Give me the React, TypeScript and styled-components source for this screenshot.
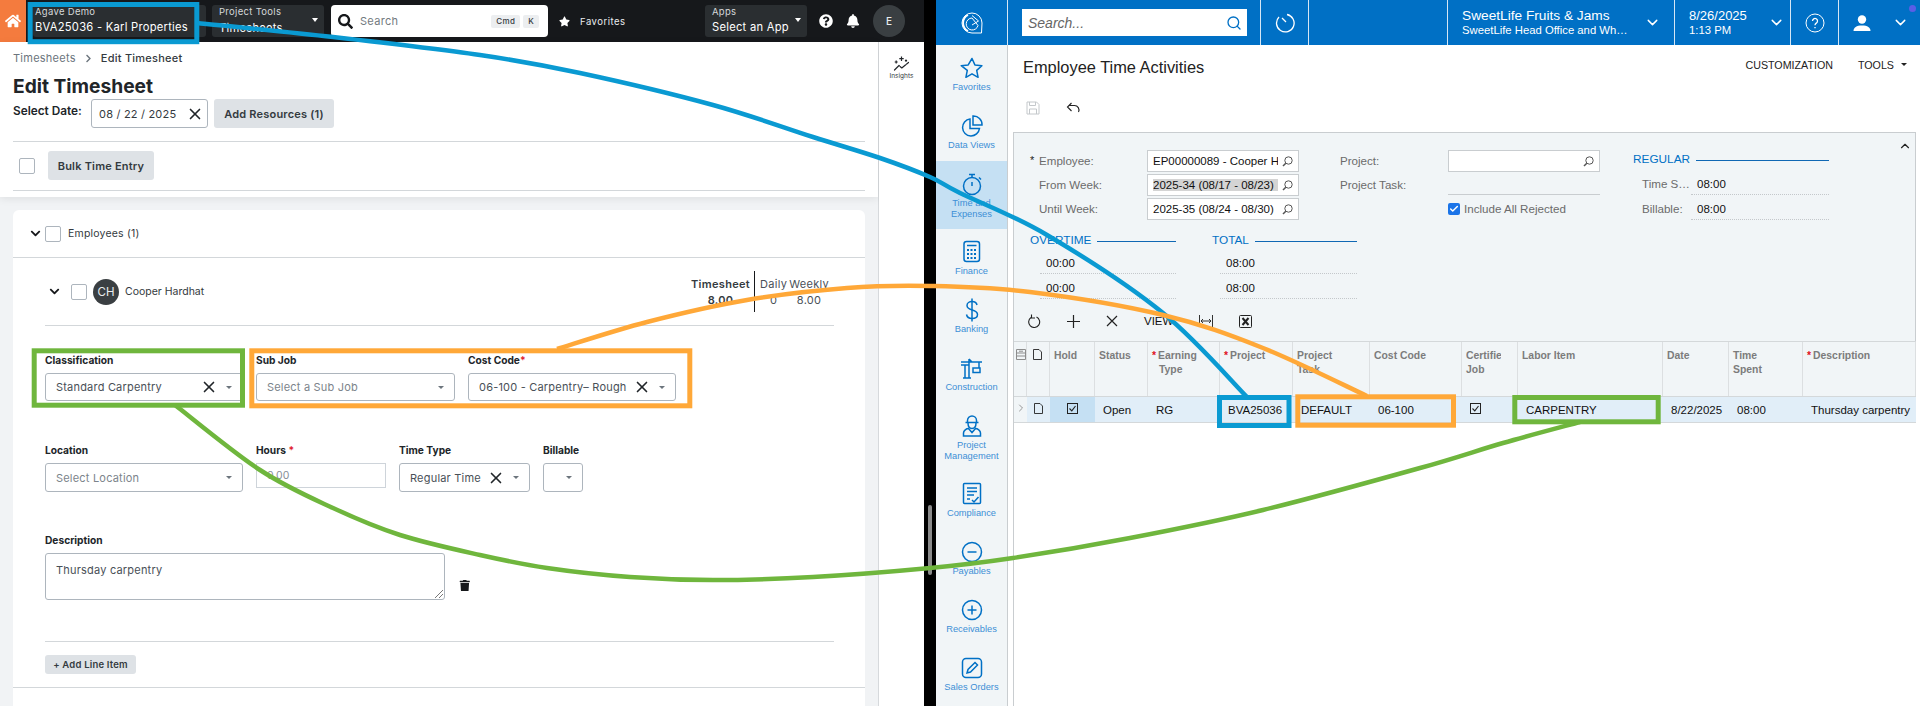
import type { ReactNode } from "react";
import styled, { createGlobalStyle } from "styled-components";
import {
  FaBell,
  FaChevronDown,
  FaChevronRight,
  FaHome,
  FaQuestionCircle,
  FaSearch,
  FaStar,
  FaTrash,
} from "react-icons/fa";
import { Check, ChevronDown, ChevronRight, ChevronUp, Search, X } from "lucide-react";

const INTER = `Inter, "Liberation Sans", sans-serif`;
const ARIAL = `"Liberation Sans", Arial, sans-serif`;
const ACU_BLUE = "#0070c5";

const GlobalStyle = createGlobalStyle`
  html, body { margin: 0; padding: 0; background: #000; }
  * { box-sizing: border-box; }
  #root { width: 1920px; height: 706px; overflow: hidden; }
`;

const Page = styled.div`
  position: relative;
  display: flex;
  width: 1920px;
  height: 706px;
  overflow: hidden;
`;

/* ---------- left app ---------- */

const LeftPane = styled.div`
  width: 924px;
  display: flex;
  flex-direction: column;
  font-family: ${INTER};
  color: #212529;
`;

const TopBar = styled.header`
  height: 42px;
  flex: none;
  display: flex;
  align-items: center;
  background: #16181b;
  padding-right: 19px;
`;

const HomeButton = styled.div`
  width: 26px;
  height: 42px;
  background: #f47b3e;
  color: #fff;
  display: flex;
  align-items: center;
  justify-content: center;
  font-size: 16px;
  margin-right: 7px;
`;

const ContextBox = styled.div<{ $w: number; $ml?: number; $pl?: number }>`
  position: relative;
  width: ${(p) => p.$w}px;
  height: 32px;
  margin-left: ${(p) => p.$ml ?? 0}px;
  padding: 0 7px 0 ${(p) => p.$pl ?? 7}px;
  background: #2a2e31;
  border-radius: 3px;
  overflow: hidden;
  color: #fff;
  flex: none;
`;

const ContextLabel = styled.div`
  font-size: 9.5px;
  line-height: 11px;
  padding-top: 1px;
  letter-spacing: 0.3px;
  color: #d5d8da;
`;

const ContextValue = styled.div<{ $low?: boolean }>`
  font-size: 11.2px;
  line-height: 14px;
  margin-top: ${(p) => (p.$low ? 4 : 3)}px;
  letter-spacing: 0.25px;
  white-space: nowrap;
`;

const WhiteCaret = styled.span`
  position: absolute;
  right: 6px;
  top: 13px;
  border: 3.5px solid transparent;
  border-top: 4px solid #fff;
  border-bottom: 0;
`;

const SearchBox = styled.div`
  width: 217px;
  height: 32px;
  margin-left: 7px;
  padding: 0 9px 0 7px;
  background: #fff;
  border-radius: 4px;
  display: flex;
  align-items: center;
  font-size: 11px;
  letter-spacing: 0.3px;
  color: #737a80;
  flex: none;

  svg {
    color: #16181b;
    font-size: 15px;
    margin-right: 7px;
  }
`;

const KbdGroup = styled.span`
  margin-left: auto;
  display: flex;
  gap: 3px;
`;

const Kbd = styled.span`
  height: 13px;
  padding: 0 5px;
  background: #eceef0;
  border-radius: 2px;
  font-size: 8px;
  font-weight: 500;
  line-height: 13px;
  color: #343a40;
`;

const FavoriteLink = styled.div`
  display: flex;
  align-items: center;
  gap: 10px;
  margin-left: 11px;
  font-size: 9.5px;
  letter-spacing: 0.5px;
  color: #e9ecef;
  flex: 1;

  svg {
    font-size: 11px;
    color: #fff;
  }
`;

const BarIcon = styled.span<{ $ml: number }>`
  display: flex;
  margin-left: ${(p) => p.$ml}px;
  color: #fff;
  font-size: 14px;
`;

const UserBadge = styled.div`
  width: 32px;
  height: 32px;
  margin-left: 13px;
  border-radius: 50%;
  background: #3a3f42;
  color: #e9ecef;
  font-size: 10px;
  font-weight: 500;
  display: flex;
  align-items: center;
  justify-content: center;
`;

const LeftBody = styled.div`
  flex: 1;
  display: flex;
  min-height: 0;
`;

const Main = styled.main`
  width: 879px;
  background: #f1f3f5;
  border-right: 1px solid #d6d9dc;
`;

const InsightsRail = styled.aside`
  flex: 1;
  background: #fff;
  padding-top: 13px;
  display: flex;
  flex-direction: column;
  align-items: center;
  font-size: 6.5px;
  color: #343a40;
`;

const PageHead = styled.div`
  height: 155px;
  padding: 0 13px;
  background: #fff;
  box-shadow: 0 2px 8px rgba(0, 0, 0, 0.08);
`;

const Crumbs = styled.nav`
  display: flex;
  align-items: center;
  height: 16px;
  padding-top: 8px;
  box-sizing: content-box;
  font-size: 11px;
  letter-spacing: 0.25px;
  color: #6c757d;

  svg {
    margin: 0 8px 0 8px;
    font-size: 9px;
  }

  b {
    font-weight: 500;
    color: #343a40;
  }
`;

const PageTitle = styled.h1`
  margin: 8px 0 0;
  font-size: 19.2px;
  line-height: 24px;
  font-weight: 700;
  color: #212529;
`;

const DateRow = styled.div`
  display: flex;
  margin-top: 1px;
`;

const DateLabel = styled.label`
  width: 78px;
  font-size: 11.8px;
  font-weight: 600;
  line-height: 24px;
`;

const DateInput = styled.div`
  width: 117px;
  height: 29px;
  border: 1px solid #adb5bd;
  border-radius: 3px;
  padding: 0 7px;
  display: flex;
  align-items: center;
  justify-content: space-between;
  font-size: 11px;
  letter-spacing: 0.2px;
  color: #343a40;
`;

const GreyButton = styled.button<{ $w: number; $ml?: number }>`
  width: ${(p) => p.$w}px;
  height: 29px;
  margin-left: ${(p) => p.$ml ?? 0}px;
  padding: 0;
  border: 0;
  border-radius: 3px;
  background: #dee2e6;
  font-family: ${INTER};
  font-size: 11px;
  font-weight: 600;
  letter-spacing: 0.2px;
  color: #343a40;
`;

const Rule = styled.hr<{ $mt?: number }>`
  height: 1px;
  border: 0;
  margin: ${(p) => p.$mt ?? 0}px 0 0;
  background: #d3d7da;
`;

const BulkRow = styled.div`
  display: flex;
  align-items: center;
  margin-top: 9px;
  padding-left: 6px;
`;

const Box = styled.span<{ $mr?: number; $ml?: number }>`
  display: block;
  width: 16px;
  height: 16px;
  margin-right: ${(p) => p.$mr ?? 0}px;
  margin-left: ${(p) => p.$ml ?? 0}px;
  border: 1px solid #adb5bd;
  border-radius: 2px;
  background: #fff;
  flex: none;
`;

const Card = styled.section`
  width: 852px;
  height: 500px;
  margin: 13px 0 0 13px;
  background: #fff;
  border-radius: 6px 6px 0 0;
`;

const CardHeader = styled.div`
  height: 48px;
  padding-left: 17px;
  display: flex;
  align-items: center;
  border-bottom: 1px solid #d3d7da;
  font-size: 10.5px;
  letter-spacing: 0.2px;
  color: #343a40;

  svg {
    font-size: 11px;
    color: #16181b;
    margin-right: 4px;
  }
`;

const CardBody = styled.div`
  padding: 0 31px 0 32px;
`;

const EmployeeRow = styled.div`
  height: 68px;
  padding: 0 5px 0 4px;
  display: flex;
  align-items: center;
  border-bottom: 1px solid #d3d7da;
  font-size: 10.5px;
  color: #343a40;

  svg {
    font-size: 11px;
    color: #16181b;
    margin-right: 11px;
  }
`;

const Initials = styled.span`
  width: 26px;
  height: 26px;
  margin: 0 6px;
  border-radius: 50%;
  background: #3a3f42;
  color: #e9ecef;
  font-size: 11.5px;
  display: flex;
  align-items: center;
  justify-content: center;
`;

const Stats = styled.div`
  margin-left: auto;
  display: flex;
  align-items: center;
  font-size: 11px;
  line-height: 16px;
  letter-spacing: 0.3px;
  text-align: center;
`;

const StatTotal = styled.div`
  font-weight: 600;
`;

const StatSplit = styled.span`
  width: 1px;
  height: 41px;
  margin: 0 5px 0 4px;
  background: #16181b;
`;

const StatGrid = styled.div`
  display: grid;
  grid-template-columns: auto auto;
  column-gap: 2px;
  color: #495057;
`;

const FieldRow = styled.div<{ $mt: number }>`
  display: flex;
  gap: 13px;
  margin-top: ${(p) => p.$mt}px;
`;

const FieldWrap = styled.div<{ $w: number }>`
  width: ${(p) => p.$w}px;
  flex: none;
`;

const FieldLabel = styled.label`
  display: block;
  height: 14px;
  margin-bottom: 6px;
  font-size: 10.2px;
  font-weight: 700;
  line-height: 14px;
  color: #212529;

  em {
    font-style: normal;
    color: #e0202c;
  }
`;

const SelectBox = styled.div<{ $h?: number }>`
  height: ${(p) => p.$h ?? 28}px;
  padding: 0 10px;
  display: flex;
  align-items: center;
  border: 1px solid #adb5bd;
  border-radius: 3px;
  font-size: 11px;
  letter-spacing: 0.2px;
  white-space: nowrap;
  color: #495057;
`;

const Placeholder = styled.span`
  color: #7c848b;
`;

const ClearIcon = styled.span`
  display: flex;
  margin-left: auto;
  color: #212529;

  svg {
    margin: -4px;
  }
`;

const DateClear = styled(ClearIcon)`
  margin-left: 0;
`;

const Caret = styled.span<{ $solo?: boolean }>`
  margin-left: ${(p) => (p.$solo ? "auto" : "12px")};
  border: 3px solid transparent;
  border-top: 3.5px solid #6c757d;
  border-bottom: 0;
`;

const HoursInput = styled.div`
  height: 25px;
  margin-top: 1px;
  padding-left: 10px;
  border: 1px solid #ced4da;
  font-size: 10.5px;
  line-height: 23px;
  color: #868e96;
`;

const DescriptionRow = styled.div`
  display: flex;
  align-items: flex-end;
  margin-top: 41px;
`;

const TextBox = styled.div`
  width: 400px;
  height: 47px;
  padding: 9px 10px;
  position: relative;
  border: 1px solid #adb5bd;
  border-radius: 3px;
  font-size: 11px;
  letter-spacing: 0.2px;
  line-height: 14px;
  color: #495057;
`;

const ResizeGrip = styled.svg`
  position: absolute;
  right: 1px;
  bottom: 1px;
`;

const TrashButton = styled.span`
  display: flex;
  margin: 0 0 9px 14px;
  font-size: 11.5px;
  color: #16181b;
`;

const AddLineButton = styled(GreyButton)`
  display: block;
  height: 19px;
  margin-top: 13px;
  font-size: 9.5px;
`;

const CardFoot = styled.div`
  margin-top: 13px;
  border-top: 1px solid #d3d7da;
`;

/* ---------- black gutter ---------- */

const Gutter = styled.div`
  position: relative;
  width: 12px;
  background: #000;
`;

const ScrollThumb = styled.div`
  position: absolute;
  left: 4px;
  top: 505px;
  width: 4px;
  height: 70px;
  border-radius: 2px;
  background: #8a8a8a;
`;

/* ---------- right app ---------- */

const RightPane = styled.div`
  width: 984px;
  display: flex;
  flex-direction: column;
  font-family: ${ARIAL};
  background: #fff;
`;

const AcuBar = styled.header`
  height: 45px;
  flex: none;
  display: flex;
  background: ${ACU_BLUE};
  color: #fff;
`;

const BarCell = styled.div<{ $w?: number; $center?: boolean; $last?: boolean }>`
  position: relative;
  width: ${(p) => (p.$w ? `${p.$w}px` : "auto")};
  flex: ${(p) => (p.$w ? "none" : 1)};
  display: flex;
  align-items: center;
  justify-content: ${(p) => (p.$center ? "center" : "flex-start")};
  border-right: ${(p) => (p.$last ? 0 : "1px solid #d5e6f5")};
`;

const AcuSearch = styled.div`
  width: 225px;
  height: 27px;
  margin-left: 14px;
  padding: 0 5px 0 6px;
  display: flex;
  align-items: center;
  justify-content: space-between;
  background: #fff;
  color: #666;
  font-size: 14px;
  font-style: italic;

  svg {
    color: ${ACU_BLUE};
  }
`;

const CellText = styled.div<{ $w: number }>`
  width: ${(p) => p.$w}px;
  margin-left: 14px;
  white-space: nowrap;
`;

const CellTop = styled.div<{ $big?: boolean }>`
  font-size: ${(p) => (p.$big ? 13.7 : 13)}px;
  line-height: 15px;
`;

const CellBottom = styled.div`
  font-size: 11.3px;
  line-height: 14px;
`;

const UserGlyph = styled.span`
  display: flex;
  margin: 0 21px 0 14px;
`;

const StatusDot = styled.span`
  position: absolute;
  right: 4px;
  top: 5px;
  width: 7px;
  height: 7px;
  border-radius: 50%;
  background: #5a5ee6;
`;

const AcuBody = styled.div`
  flex: 1;
  display: flex;
  min-height: 0;
`;

const Sidebar = styled.nav`
  width: 72px;
  flex: none;
  background: #f1f5f7;
  border-right: 1px solid #c9cdd0;
`;

const NavItem = styled.div<{ $tall?: boolean; $active?: boolean }>`
  height: ${(p) => (p.$tall ? 68 : 58)}px;
  padding-top: 11px;
  display: flex;
  flex-direction: column;
  align-items: center;
  background: ${(p) => (p.$active ? "#c5e0f3" : "transparent")};
  color: ${ACU_BLUE};
`;

const NavLabel = styled.div`
  margin-top: 2px;
  font-size: 9.3px;
  line-height: 10.5px;
  text-align: center;
  white-space: pre-line;
  color: #3d8fd6;
`;

const Content = styled.div`
  flex: 1;
  min-width: 0;
`;

const TitleRow = styled.div`
  height: 45px;
  padding: 0 13px 0 15px;
  display: flex;
  align-items: center;
`;

const ScreenTitle = styled.h2`
  margin: 0;
  font-size: 16.4px;
  font-weight: 400;
  color: #222;
`;

const TitleLinks = styled.div`
  margin-left: auto;
  margin-top: -6px;
  display: flex;
  align-items: center;
  gap: 25px;
  font-size: 10.7px;
  color: #222;
`;

const TinyCaret = styled.span`
  margin-left: -18px;
  border: 3px solid transparent;
  border-top: 3.5px solid #222;
  border-bottom: 0;
`;

const ScreenTools = styled.div`
  height: 42px;
  padding: 0 0 6px 18px;
  display: flex;
  align-items: center;
  gap: 26px;
`;

const Sheet = styled.div`
  height: 574px;
  margin: 0 4px 0 5px;
  border-left: 1px solid #c9cdd0;
`;

const FormPanel = styled.div`
  position: relative;
  height: 209px;
  background: #f1f5f7;
  border-top: 1px solid #c9cdd0;
  border-right: 1px solid #c9cdd0;
`;

const FormBody = styled.div`
  height: 166px;
  padding: 17px 0 0 16px;
`;

const CollapseIcon = styled.span`
  position: absolute;
  right: 3px;
  top: 6px;
  display: flex;
  color: #222;
`;

const FormTop = styled.div`
  display: flex;
  height: 72px;
`;

const FormCol = styled.div<{ $w: number; $ml?: number }>`
  width: ${(p) => p.$w}px;
  margin-left: ${(p) => p.$ml ?? 0}px;
  flex: none;
`;

const FormLine = styled.div`
  position: relative;
  height: 24px;
  display: flex;
  align-items: flex-start;
`;

const FormLabel = styled.span<{ $w: number; $pl?: number }>`
  width: ${(p) => p.$w}px;
  padding-left: ${(p) => p.$pl ?? 9}px;
  font-size: 11.6px;
  line-height: 21px;
  color: #6b6b6b;
  white-space: nowrap;
  flex: none;
`;

const RequiredMark = styled.span`
  position: absolute;
  left: 0;
  top: 0;
  font-size: 11px;
  line-height: 21px;
  color: #222;
`;

const LookupInput = styled.div`
  width: 152px;
  height: 22px;
  padding: 0 5px;
  display: flex;
  align-items: center;
  border: 1px solid #c9cdd0;
  background: #fff;
  font-size: 11.5px;
  color: #111;
  overflow: hidden;
`;

const LookupText = styled.span<{ $selected?: boolean }>`
  width: 125px;
  overflow: hidden;
  white-space: nowrap;
  background: ${(p) => (p.$selected ? "#d4d4d4" : "transparent")};
`;

const LookupIcon = styled.span`
  display: flex;
  margin-left: auto;
  color: #555;
`;

const Underlined = styled.div`
  flex: 1;
  height: 21px;
  border-bottom: 1px solid #c9cdd0;
`;

const CheckField = styled.div`
  display: flex;
  align-items: center;
  gap: 4px;
  height: 21px;
  font-size: 11.6px;
  color: #6b6b6b;
`;

const BlueCheck = styled.span`
  width: 12px;
  height: 12px;
  border-radius: 2px;
  background: #1b74e8;
  color: #fff;
  display: flex;
  align-items: center;
  justify-content: center;
`;

const SectionHead = styled.div`
  display: flex;
  align-items: center;
  gap: 6px;
  height: 17px;
  margin-bottom: 1px;
  font-size: 11.8px;
  color: ${ACU_BLUE};
`;

const RegularHead = styled(SectionHead)`
  padding-top: 1px;
  margin-bottom: 3px;
`;

const SectionLine = styled.span`
  flex: 1;
  height: 1px;
  margin-top: 3px;
  background: #1068b4;
`;

const ReadoutLine = styled.div`
  display: flex;
  height: 25px;
`;

const ReadoutLabel = styled(FormLabel)`
  line-height: 27px;
`;

const ValueLine = styled.div<{ $pl: number }>`
  display: flex;
  height: 25px;
  padding-left: ${(p) => p.$pl}px;
`;

const ValueCell = styled.div`
  flex: 1;
  display: flex;
  align-items: flex-end;
  padding: 0 0 2px 6px;
  border-bottom: 1px dotted #c4c8cb;
  font-size: 11.5px;
  line-height: 16px;
  color: #111;
`;

const Totals = styled.div`
  display: flex;
  margin-top: 9px;
`;

const GridTools = styled.div`
  height: 42px;
  padding: 2px 0 0 14px;
  display: flex;
  align-items: center;
  gap: 26px;
  font-size: 11.5px;
  color: #111;
`;

const GRID_COLUMNS = "13px 23px 45px 53px 72px 73px 77px 92px 56px 145px 66px 74px 113px";

const GridHead = styled.div`
  display: grid;
  grid-template-columns: ${GRID_COLUMNS};
  height: 56px;
  background: #f1f5f7;
  border-top: 1px solid #d4d8da;
  border-bottom: 1px solid #d4d8da;
`;

const HeadCell = styled.div<{ $pl?: number }>`
  padding: 7px 0 0 ${(p) => p.$pl ?? 4}px;
  border-right: 1px solid #dcdfe1;
  font-size: 10.4px;
  font-weight: 700;
  line-height: 14px;
  color: #7c7c7c;
  white-space: pre-line;

  i {
    font-style: normal;
    color: #e0101c;
    margin-right: 2px;
  }
`;

const HangingLine = styled.span`
  padding-left: 7px;
`;

const ClippedHead = styled.span`
  display: block;
  width: 35px;
  overflow: hidden;
  white-space: nowrap;
`;

const GridRow = styled.div`
  display: grid;
  grid-template-columns: ${GRID_COLUMNS};
  height: 26px;
  background: #e1eef8;
  border-bottom: 1px solid #d4d8da;
`;

const RowCell = styled.div<{ $active?: boolean; $center?: boolean }>`
  display: flex;
  align-items: center;
  justify-content: ${(p) => (p.$center ? "center" : "flex-start")};
  padding-left: ${(p) => (p.$center ? 0 : 8)}px;
  background: ${(p) => (p.$active ? "#c5e0f3" : "transparent")};
  font-size: 11.5px;
  white-space: nowrap;
  color: #111;

  svg {
    margin-bottom: 3px;
  }
`;

const RowHandle = styled(RowCell)`
  background: #f1f5f7;
  color: #777;
  padding-left: 0;
`;

const Annotations = styled.svg`
  position: absolute;
  inset: 0;
  pointer-events: none;
`;

/* ---------- drawings ---------- */

function InsightsIcon() {
  return (
    <svg width="17" height="17" viewBox="0 0 17 17" fill="none" stroke="#212529" strokeWidth="1.2">
      <path d="M1.5 15 6 10.5l2.8 2.5L15.5 7.5" strokeLinecap="round" strokeLinejoin="round" strokeDasharray="7 1.2" />
      <path d="M8.5 1.5v4.5M6.3 3.7h4.4M3.2 5.5v3M1.7 7h3M13 4.5v2.2M11.9 5.6h2.2" />
    </svg>
  );
}

const stroke = { fill: "none", stroke: "currentColor", strokeWidth: 1.5 };

const navIcons: Record<string, ReactNode> = {
  star: <path {...stroke} strokeLinejoin="round" d="M12 2.5l2.9 6.4 7 .8-5.2 4.7 1.4 6.9-6.1-3.5-6.1 3.5 1.4-6.9L1.2 9.700l7-.8z" />,
  pie: (
    <g {...stroke}>
      <path d="M10 5a8.500 8.500 0 1 0 9.500 9.500H10z" />
      <path d="M13 2a8.500 8.500 0 0 1 9 9h-9z" />
    </g>
  ),
  timer: (
    <g {...stroke}>
      <circle cx="12" cy="14" r="8.500" />
      <path d="M9 2.500h6M12 2.500v3M19 5.500l2 2M12 10v4" />
    </g>
  ),
  calc: (
    <g {...stroke}>
      <rect x="4" y="1.500" width="15.500" height="20" rx="2.500" />
      <path d="M7 5.500h9.500" />
      <path strokeDasharray="2 1.500" strokeWidth="2" d="M7 10h10M7 14h10M7 18h10" />
    </g>
  ),
  dollar: (
    <g {...stroke}>
      <path d="M17 7c-.5-2.500-2.500-3.500-5-3.500S7 5 7 7.500c0 6 10.500 3 10.500 9 0 2.500-2.500 4-5.500 4s-5-1.500-5.500-4" />
      <path d="M12 .5v23" />
    </g>
  ),
  crane: (
    <g {...stroke}>
      <path d="M1 6h21M1 9h8M5 9v13M9 3v19M3 22h8M12 6l-3-3M19 6v6" />
      <rect x="13" y="12" width="7" height="4.500" />
    </g>
  ),
  worker: (
    <g {...stroke}>
      <path d="M7.500 8V6.500a4.500 4.500 0 0 1 9 0V8M5.500 8.500h13" />
      <path d="M8 9c0 3 1.500 5.500 4 5.500S16 12 16 9" />
      <path d="M3.500 22v-3c0-2.500 3-4.500 5-4.500l3.500 4 3.500-4c2 0 5 2 5 4.500v3z" />
    </g>
  ),
  checklist: (
    <g {...stroke}>
      <rect x="3.500" y="1.500" width="17" height="20" rx="1" />
      <path d="M7 6h10M7 9.500h10M7 13h7M7 17h3" />
      <path d="M12 18l2 2 4.500-5" />
    </g>
  ),
  minus: (
    <g {...stroke}>
      <circle cx="12" cy="12" r="9.500" />
      <path d="M7.500 12h9" />
    </g>
  ),
  plus: (
    <g {...stroke}>
      <circle cx="12" cy="12" r="9.500" />
      <path d="M7.500 12h9M12 7.500v9" />
    </g>
  ),
  pencil: (
    <g {...stroke}>
      <rect x="2.500" y="2.500" width="19" height="19" rx="3.500" />
      <path d="M7 17l1-3.500 7-7 2.500 2.500-7 7z" />
    </g>
  ),
};

const navItems = [
  { icon: "star", label: "Favorites" },
  { icon: "pie", label: "Data Views" },
  { icon: "timer", label: "Time and\nExpenses", tall: true, active: true },
  { icon: "calc", label: "Finance" },
  { icon: "dollar", label: "Banking" },
  { icon: "crane", label: "Construction" },
  { icon: "worker", label: "Project\nManagement", tall: true },
  { icon: "checklist", label: "Compliance" },
  { icon: "minus", label: "Payables" },
  { icon: "plus", label: "Receivables" },
  { icon: "pencil", label: "Sales Orders" },
];

function AcuLogo() {
  return (
    <svg width="24" height="24" viewBox="0 0 24 24" fill="none" stroke="#fff" strokeWidth="1">
      <path d="M21.500 22H12A10 10 0 1 1 22 12z" />
      <path d="M8 4A9 9 0 0 0 8 20" strokeWidth="1.800" />
      <path d="M12 7a6 6 0 1 0 6 7.500z" />
      <path d="M12 4.500 18.500 10 12 14" />
    </svg>
  );
}

function RecentIcon() {
  return (
    <svg width="20" height="20" viewBox="0 0 20 20" fill="none" stroke="#fff" strokeWidth="1.300">
      <path d="M12 1.500A8.800 8.800 0 1 1 4 4" />
      <path d="M7 5l4 4" />
    </svg>
  );
}

function HelpCircle() {
  return (
    <svg width="20" height="20" viewBox="0 0 20 20" fill="none" stroke="#fff" strokeWidth="1">
      <circle cx="10" cy="10" r="9" />
      <path d="M7.500 8a2.500 2.500 0 1 1 3.800 2.100c-.9.600-1.300 1-1.300 2.100M10 14v1.200" strokeWidth="1.300" />
    </svg>
  );
}

function UserIcon() {
  return (
    <svg width="18" height="16" viewBox="0 0 18 16" fill="#fff">
      <circle cx="9" cy="4.500" r="4.200" />
      <path d="M0.500 16c0-3.500 3-5.500 8.500-5.500s8.500 2 8.500 5.500z" />
    </svg>
  );
}

function LookupGlass() {
  return (
    <svg width="11" height="11" viewBox="0 0 11 11" fill="none" stroke="currentColor" strokeWidth="1">
      <circle cx="6.500" cy="4.500" r="3.700" />
      <path d="M3.800 7.200 1 10" strokeWidth="1.500" />
    </svg>
  );
}

function SaveIcon() {
  return (
    <svg width="14" height="14" viewBox="0 0 14 14" fill="none" stroke="#c4c8cb" strokeWidth="1">
      <path d="M1 1h9.500L13 3.500V13H1z" />
      <path d="M3.500 1v3.500h6V1M3.500 13V8h7v5" />
    </svg>
  );
}

function UndoIcon() {
  return (
    <svg width="15" height="13" viewBox="0 0 15 13" fill="none" stroke="#222" strokeWidth="1.100">
      <path d="M3 3.500h5.500a4.500 4.500 0 0 1 4 6.500" />
      <path d="M5.500 1 1.500 5l4 4" />
    </svg>
  );
}

function RefreshIcon() {
  return (
    <svg width="13" height="14" viewBox="0 0 13 14" fill="none" stroke="#222" strokeWidth="1.100">
      <path d="M8.500 3A5.500 5.500 0 1 1 3 3.500" />
      <path d="M3.500 .5V4H7" />
    </svg>
  );
}

function PlusIcon() {
  return (
    <svg width="13" height="13" viewBox="0 0 13 13" stroke="#222" strokeWidth="1.200">
      <path d="M6.500 0v13M0 6.500h13" />
    </svg>
  );
}

function CrossIcon() {
  return (
    <svg width="12" height="12" viewBox="0 0 12 12" stroke="#222" strokeWidth="1.200">
      <path d="M1 1l10 10M11 1 1 11" />
    </svg>
  );
}

function FitIcon() {
  return (
    <svg width="14" height="12" viewBox="0 0 14 12" stroke="#333" strokeWidth="1" fill="none">
      <path d="M.5 0v12M13.500 0v12M2 6h10M4 4 2 6l2 2M10 4l2 2-2 2" />
    </svg>
  );
}

function ExcelIcon() {
  return (
    <svg width="13" height="13" viewBox="0 0 13 13" fill="none" stroke="#222">
      <rect x=".5" y=".5" width="12" height="12" rx="1" />
      <path d="M3.500 3 9.500 10M9.500 3 3.500 10" strokeWidth="2" />
    </svg>
  );
}

function ColumnsIcon() {
  return (
    <svg width="10" height="11" viewBox="0 0 10 11" fill="none" stroke="#8d8d8d">
      <path d="M.5.500h9v10h-9zM.5 4h9M.5 7h9M3 2.200h4" />
    </svg>
  );
}

function PageIcon({ color = "#222" }: { color?: string }) {
  return (
    <svg width="9" height="11" viewBox="0 0 9 11" fill="none" stroke={color} strokeWidth=".9">
      <path d="M.5.500h5.500L8.500 3v7.500h-8z" />
    </svg>
  );
}

function GridCheck() {
  return (
    <svg width="11" height="11" viewBox="0 0 11 11" fill="none" stroke="#222">
      <rect x=".5" y=".5" width="10" height="10" />
      <path d="M2.500 5.500 4.800 7.800 8.500 3" strokeWidth="1.100" />
    </svg>
  );
}

// curve through the measured points of each annotation line
function smoothPath(pts: [number, number][]) {
  let d = `M${pts[0][0]},${pts[0][1]}`;
  for (let i = 0; i < pts.length - 1; i++) {
    const p0 = pts[i - 1] ?? pts[i];
    const p1 = pts[i];
    const p2 = pts[i + 1];
    const p3 = pts[i + 2] ?? p2;
    const c1x = p1[0] + (p2[0] - p0[0]) / 6;
    const c1y = p1[1] + (p2[1] - p0[1]) / 6;
    const c2x = p2[0] - (p3[0] - p1[0]) / 6;
    const c2y = p2[1] - (p3[1] - p1[1]) / 6;
    d += ` C${c1x},${c1y} ${c2x},${c2y} ${p2[0]},${p2[1]}`;
  }
  return d;
}

const BLUE = "#0a9ad2";
const ORANGE = "#ffa838";
const GREEN = "#6fb63d";

const bluePts: [number, number][] = [
  [197, 23], [333, 37], [480, 55], [580, 73], [713, 105], [813, 137], [880, 158], [930, 177],
  [960, 193], [1047, 235], [1163, 313], [1247, 397],
];
const orangePts: [number, number][] = [
  [557, 349], [647, 322], [747, 300], [847, 288], [930, 286], [1030, 292], [1163, 315], [1263, 348], [1367, 396],
];
const greenPts: [number, number][] = [
  [175, 405], [260, 470], [333, 508], [400, 535], [480, 555], [547, 568], [630, 577], [713, 580],
  [813, 577], [930, 568], [1013, 558], [1130, 538], [1263, 510], [1420, 468], [1503, 443], [1580, 422],
];

function Caller({ rects, pts, color }: { rects: number[][]; pts: [number, number][]; color: string }) {
  return (
    <g fill="none" stroke={color}>
      {rects.map(([x, y, r, b]) => (
        <rect key={x} x={x} y={y} width={r - x} height={b - y} strokeWidth="5" />
      ))}
      <path d={smoothPath(pts)} strokeWidth="4.500" />
    </g>
  );
}

function BigX() {
  return <X size={18} strokeWidth={2.2} />;
}

function ClearableSelect({ children }: { children: ReactNode }) {
  return (
    <SelectBox>
      {children}
      <ClearIcon>
        <BigX />
      </ClearIcon>
      <Caret />
    </SelectBox>
  );
}

export default function App() {
  return (
    <Page>
      <GlobalStyle />

      <LeftPane>
        <TopBar>
          <HomeButton>
            <FaHome />
          </HomeButton>
          <ContextBox $w={173} $pl={2}>
            <ContextLabel>Agave Demo</ContextLabel>
            <ContextValue>BVA25036 - Karl Properties</ContextValue>
          </ContextBox>
          <ContextBox $w={112} $ml={6}>
            <ContextLabel>Project Tools</ContextLabel>
            <ContextValue $low>Timesheets</ContextValue>
            <WhiteCaret />
          </ContextBox>
          <SearchBox>
            <FaSearch />
            Search
            <KbdGroup>
              <Kbd>Cmd</Kbd>
              <Kbd>K</Kbd>
            </KbdGroup>
          </SearchBox>
          <FavoriteLink>
            <FaStar />
            Favorites
          </FavoriteLink>
          <ContextBox $w={102}>
            <ContextLabel>Apps</ContextLabel>
            <ContextValue>Select an App</ContextValue>
            <WhiteCaret />
          </ContextBox>
          <BarIcon $ml={12}>
            <FaQuestionCircle />
          </BarIcon>
          <BarIcon $ml={13}>
            <FaBell />
          </BarIcon>
          <UserBadge>E</UserBadge>
        </TopBar>

        <LeftBody>
          <Main>
            <PageHead>
              <Crumbs>
                Timesheets
                <FaChevronRight />
                <b>Edit Timesheet</b>
              </Crumbs>
              <PageTitle>Edit Timesheet</PageTitle>
              <DateRow>
                <DateLabel>Select Date:</DateLabel>
                <DateInput>
                  08 / 22 / 2025
                  <DateClear>
                    <BigX />
                  </DateClear>
                </DateInput>
                <GreyButton $w={120} $ml={6}>
                  Add Resources (1)
                </GreyButton>
              </DateRow>
              <Rule $mt={13} />
              <BulkRow>
                <Box $mr={13} />
                <GreyButton $w={106}>Bulk Time Entry</GreyButton>
              </BulkRow>
              <Rule $mt={10} />
            </PageHead>

            <Card>
              <CardHeader>
                <FaChevronDown />
                <Box $mr={7} />
                Employees (1)
              </CardHeader>
              <CardBody>
                <EmployeeRow>
                  <FaChevronDown />
                  <Box />
                  <Initials>CH</Initials>
                  Cooper Hardhat
                  <Stats>
                    <StatTotal>
                      Timesheet
                      <br />
                      8.00
                    </StatTotal>
                    <StatSplit />
                    <StatGrid>
                      <span>Daily</span>
                      <span>Weekly</span>
                      <span>0</span>
                      <span>8.00</span>
                    </StatGrid>
                  </Stats>
                </EmployeeRow>

                <FieldRow $mt={27}>
                  <FieldWrap $w={198}>
                    <FieldLabel>Classification</FieldLabel>
                    <ClearableSelect>Standard Carpentry</ClearableSelect>
                  </FieldWrap>
                  <FieldWrap $w={199}>
                    <FieldLabel>Sub Job</FieldLabel>
                    <SelectBox>
                      <Placeholder>Select a Sub Job</Placeholder>
                      <Caret $solo />
                    </SelectBox>
                  </FieldWrap>
                  <FieldWrap $w={208}>
                    <FieldLabel>
                      Cost Code<em>*</em>
                    </FieldLabel>
                    <ClearableSelect>06-100 - Carpentry– Rough</ClearableSelect>
                  </FieldWrap>
                </FieldRow>

                <FieldRow $mt={42}>
                  <FieldWrap $w={198}>
                    <FieldLabel>Location</FieldLabel>
                    <SelectBox $h={29}>
                      <Placeholder>Select Location</Placeholder>
                      <Caret $solo />
                    </SelectBox>
                  </FieldWrap>
                  <FieldWrap $w={130}>
                    <FieldLabel>
                      Hours <em>*</em>
                    </FieldLabel>
                    <HoursInput>0.00</HoursInput>
                  </FieldWrap>
                  <FieldWrap $w={131}>
                    <FieldLabel>Time Type</FieldLabel>
                    <SelectBox $h={29}>
                      Regular Time
                      <ClearIcon>
                        <BigX />
                      </ClearIcon>
                      <Caret />
                    </SelectBox>
                  </FieldWrap>
                  <FieldWrap $w={40}>
                    <FieldLabel>Billable</FieldLabel>
                    <SelectBox $h={29}>
                      <Caret $solo />
                    </SelectBox>
                  </FieldWrap>
                </FieldRow>

                <DescriptionRow>
                  <FieldWrap $w={400}>
                    <FieldLabel>Description</FieldLabel>
                    <TextBox>
                      Thursday carpentry
                      <ResizeGrip width="8" height="8" viewBox="0 0 8 8" stroke="#555" strokeWidth=".8">
                        <path d="M0 8 8 0M4 8l4-4" />
                      </ResizeGrip>
                    </TextBox>
                  </FieldWrap>
                  <TrashButton>
                    <FaTrash />
                  </TrashButton>
                </DescriptionRow>

                <Rule $mt={41} />
                <AddLineButton $w={91}>+ Add Line Item</AddLineButton>
              </CardBody>
              <CardFoot />
            </Card>
          </Main>
          <InsightsRail>
            <InsightsIcon />
            <span>Insights</span>
          </InsightsRail>
        </LeftBody>
      </LeftPane>

      <Gutter>
        <ScrollThumb />
      </Gutter>

      <RightPane>
        <AcuBar>
          <BarCell $w={72} $center>
            <AcuLogo />
          </BarCell>
          <BarCell $w={253}>
            <AcuSearch>
              Search...
              <Search size={16} strokeWidth={2} />
            </AcuSearch>
          </BarCell>
          <BarCell $w={48} $center>
            <RecentIcon />
          </BarCell>
          <BarCell />
          <BarCell $w={227}>
            <CellText $w={182}>
              <CellTop $big>SweetLife Fruits &amp; Jams</CellTop>
              <CellBottom>SweetLife Head Office and Wh…</CellBottom>
            </CellText>
            <ChevronDown size={17} strokeWidth={2} />
          </BarCell>
          <BarCell $w={116}>
            <CellText $w={79}>
              <CellTop>8/26/2025</CellTop>
              <CellBottom>1:13 PM</CellBottom>
            </CellText>
            <ChevronDown size={17} strokeWidth={2} />
          </BarCell>
          <BarCell $w={48} $center>
            <HelpCircle />
          </BarCell>
          <BarCell $w={81} $last>
            <UserGlyph>
              <UserIcon />
            </UserGlyph>
            <ChevronDown size={17} strokeWidth={2} />
            <StatusDot />
          </BarCell>
        </AcuBar>

        <AcuBody>
          <Sidebar>
            {navItems.map((item) => (
              <NavItem key={item.label} $tall={item.tall} $active={item.active}>
                <svg width="24" height="24" viewBox="0 0 24 24">
                  {navIcons[item.icon]}
                </svg>
                <NavLabel>{item.label}</NavLabel>
              </NavItem>
            ))}
          </Sidebar>

          <Content>
            <TitleRow>
              <ScreenTitle>Employee Time Activities</ScreenTitle>
              <TitleLinks>
                <span>CUSTOMIZATION</span>
                <span>TOOLS</span>
                <TinyCaret />
              </TitleLinks>
            </TitleRow>
            <ScreenTools>
              <SaveIcon />
              <UndoIcon />
            </ScreenTools>

            <Sheet>
              <FormPanel>
                <CollapseIcon>
                  <ChevronUp size={14} strokeWidth={2} />
                </CollapseIcon>
                <FormBody>
                  <FormTop>
                    <FormCol $w={269}>
                      <FormLine>
                        <RequiredMark>*</RequiredMark>
                        <FormLabel $w={117}>Employee:</FormLabel>
                        <LookupInput>
                          <LookupText>EP00000089 - Cooper H</LookupText>
                          <LookupIcon>
                            <LookupGlass />
                          </LookupIcon>
                        </LookupInput>
                      </FormLine>
                      <FormLine>
                        <FormLabel $w={117}>From Week:</FormLabel>
                        <LookupInput>
                          <LookupText $selected>2025-34 (08/17 - 08/23)</LookupText>
                          <LookupIcon>
                            <LookupGlass />
                          </LookupIcon>
                        </LookupInput>
                      </FormLine>
                      <FormLine>
                        <FormLabel $w={117}>Until Week:</FormLabel>
                        <LookupInput>
                          <LookupText>2025-35 (08/24 - 08/30)</LookupText>
                          <LookupIcon>
                            <LookupGlass />
                          </LookupIcon>
                        </LookupInput>
                      </FormLine>
                    </FormCol>
                    <FormCol $w={260} $ml={41}>
                      <FormLine>
                        <FormLabel $w={108} $pl={0}>Project:</FormLabel>
                        <LookupInput>
                          <LookupIcon>
                            <LookupGlass />
                          </LookupIcon>
                        </LookupInput>
                      </FormLine>
                      <FormLine>
                        <FormLabel $w={108} $pl={0}>Project Task:</FormLabel>
                        <Underlined />
                      </FormLine>
                      <FormLine>
                        <FormLabel $w={108} $pl={0} />
                        <CheckField>
                          <BlueCheck>
                            <Check size={10} strokeWidth={3.5} />
                          </BlueCheck>
                          Include All Rejected
                        </CheckField>
                      </FormLine>
                    </FormCol>
                    <FormCol $w={196} $ml={33}>
                      <RegularHead>
                        REGULAR
                        <SectionLine />
                      </RegularHead>
                      <ReadoutLine>
                        <ReadoutLabel $w={58}>Time S…</ReadoutLabel>
                        <ValueCell>08:00</ValueCell>
                      </ReadoutLine>
                      <ReadoutLine>
                        <ReadoutLabel $w={58}>Billable:</ReadoutLabel>
                        <ValueCell>08:00</ValueCell>
                      </ReadoutLine>
                    </FormCol>
                  </FormTop>

                  <Totals>
                    <FormCol $w={146}>
                      <SectionHead>
                        OVERTIME
                        <SectionLine />
                      </SectionHead>
                      <ValueLine $pl={10}>
                        <ValueCell>00:00</ValueCell>
                      </ValueLine>
                      <ValueLine $pl={10}>
                        <ValueCell>00:00</ValueCell>
                      </ValueLine>
                    </FormCol>
                    <FormCol $w={145} $ml={36}>
                      <SectionHead>
                        TOTAL
                        <SectionLine />
                      </SectionHead>
                      <ValueLine $pl={8}>
                        <ValueCell>08:00</ValueCell>
                      </ValueLine>
                      <ValueLine $pl={8}>
                        <ValueCell>08:00</ValueCell>
                      </ValueLine>
                    </FormCol>
                  </Totals>
                </FormBody>

                <GridTools>
                  <RefreshIcon />
                  <PlusIcon />
                  <CrossIcon />
                  <span>VIEW</span>
                  <FitIcon />
                  <ExcelIcon />
                </GridTools>
              </FormPanel>

              <GridHead>
                <HeadCell $pl={2}>
                  <ColumnsIcon />
                </HeadCell>
                <HeadCell $pl={6}>
                  <PageIcon />
                </HeadCell>
                <HeadCell>Hold</HeadCell>
                <HeadCell>Status</HeadCell>
                <HeadCell>
                  <i>*</i>Earning{"\n"}
                  <HangingLine>Type</HangingLine>
                </HeadCell>
                <HeadCell>
                  <i>*</i>Project
                </HeadCell>
                <HeadCell>{"Project\nTask"}</HeadCell>
                <HeadCell>Cost Code</HeadCell>
                <HeadCell>
                  <ClippedHead>Certified</ClippedHead>
                  Job
                </HeadCell>
                <HeadCell>Labor Item</HeadCell>
                <HeadCell>Date</HeadCell>
                <HeadCell>{"Time\nSpent"}</HeadCell>
                <HeadCell>
                  <i>*</i>Description
                </HeadCell>
              </GridHead>

              <GridRow>
                <RowHandle $center>
                  <ChevronRight size={12} strokeWidth={1.5} />
                </RowHandle>
                <RowCell $center>
                  <PageIcon />
                </RowCell>
                <RowCell $center $active>
                  <GridCheck />
                </RowCell>
                <RowCell>Open</RowCell>
                <RowCell>RG</RowCell>
                <RowCell>BVA25036</RowCell>
                <RowCell>DEFAULT</RowCell>
                <RowCell>06-100</RowCell>
                <RowCell>
                  <GridCheck />
                </RowCell>
                <RowCell>CARPENTRY</RowCell>
                <RowCell>8/22/2025</RowCell>
                <RowCell>08:00</RowCell>
                <RowCell>Thursday carpentry</RowCell>
              </GridRow>
            </Sheet>
          </Content>
        </AcuBody>
      </RightPane>

      <Annotations width="1920" height="706" viewBox="0 0 1920 706">
        <Caller color={BLUE} pts={bluePts} rects={[[30.2, 4.5, 196.8, 41.7], [1219.5, 397.5, 1289, 425.5]]} />
        <Caller color={ORANGE} pts={orangePts} rects={[[251.8, 350.8, 689.8, 405.8], [1297.8, 396.8, 1453.5, 425.2]]} />
        <Caller color={GREEN} pts={greenPts} rects={[[34.2, 350.8, 242.5, 405.2], [1514.8, 397.5, 1658.2, 421.8]]} />
      </Annotations>
    </Page>
  );
}
